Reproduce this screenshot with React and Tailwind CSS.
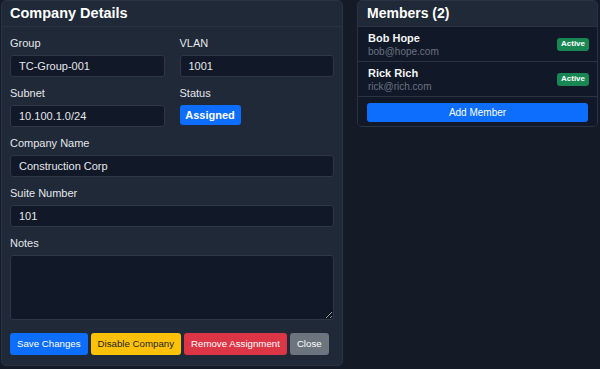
import React from "react";

const font = { fontFamily: '"Liberation Sans", Arial, sans-serif' };

function Field({ label, value, className = "" }) {
  return (
    <div className={"flex flex-col " + className}>
      <div className="h-[14px] leading-[14px] text-[11px] text-gray-200 mb-[5px]">{label}</div>
      <div className="h-[22px] rounded-[3px] border border-[#2d3748] bg-[#111827] px-[8px] flex items-center text-[11px] text-gray-200">
        {value}
      </div>
    </div>
  );
}

function Member({ name, email }) {
  return (
    <div className="h-[35px] border-b border-[#2a3342] pl-[10px] pr-[8px] flex items-center justify-between bg-[#111827]">
      <div className="flex flex-col">
        <div className="text-[11px] font-bold text-gray-100 leading-[14px]">{name}</div>
        <div className="text-[10px] text-gray-500 leading-[13px]">{email}</div>
      </div>
      <div className="h-[13px] px-[4px] rounded-[3px] bg-[#198754] text-white text-[8px] font-bold flex items-center">Active</div>
    </div>
  );
}

function Btn({ children, cls }) {
  return (
    <div className={"h-[22px] px-[7px] rounded-[3px] text-[9.7px] flex items-center whitespace-nowrap shrink-0 " + cls}>{children}</div>
  );
}

export default function App() {
  return (
    <div style={font} className="w-[600px] h-[369px] bg-[#141a26] flex items-start gap-[14px] pl-[1px] overflow-hidden">
      <div className="w-[342px] h-[366px] rounded-[5px] border border-[#2a3342] bg-[#1f2937] flex flex-col">
        <div className="h-[26px] px-[8px] flex items-center border-b border-[#2a3342] text-[14.5px] font-bold text-white">Company Details</div>
        <div className="px-[8px] pt-[9px] flex flex-col gap-[9px]">
          <div className="grid grid-cols-2 gap-[15px]">
            <Field label="Group" value="TC-Group-001" />
            <Field label="VLAN" value="1001" />
          </div>
          <div className="grid grid-cols-2 gap-[15px]">
            <Field label="Subnet" value="10.100.1.0/24" />
            <div className="flex flex-col">
              <div className="h-[14px] leading-[14px] text-[11px] text-gray-200 mb-[5px]">Status</div>
              <div className="h-[20px] w-[61px] rounded-[3px] bg-[#0d6efd] text-white text-[11px] font-bold flex items-center justify-center">Assigned</div>
            </div>
          </div>
          <Field label="Company Name" value="Construction Corp" />
          <Field label="Suite Number" value="101" />
          <div className="flex flex-col">
            <div className="h-[14px] leading-[14px] text-[11px] text-gray-200 mb-[5px]">Notes</div>
            <textarea className="h-[65px] rounded-[3px] border border-[#2d3748] bg-[#111827] resize-y outline-none" />
          </div>
          <div className="flex gap-[3px] mt-[4px]">
            <Btn cls="bg-[#0d6efd] text-white">Save Changes</Btn>
            <Btn cls="bg-[#ffc107] text-[#212529]">Disable Company</Btn>
            <Btn cls="bg-[#dc3545] text-white">Remove Assignment</Btn>
            <Btn cls="bg-[#6c757d] text-white">Close</Btn>
          </div>
        </div>
      </div>
      <div className="w-[241px] rounded-[5px] border border-[#2a3342] bg-[#1f2937] flex flex-col overflow-hidden">
        <div className="h-[26px] px-[9px] flex items-center border-b border-[#2a3342] text-[14px] font-bold text-white">Members (2)</div>
        <Member name="Bob Hope" email="bob@hope.com" />
        <Member name="Rick Rich" email="rick@rich.com" />
        <div className="bg-[#111827] px-[9px] pt-[6px] pb-[4px]">
          <div className="h-[19px] rounded-[3px] bg-[#0d6efd] text-white text-[10px] flex items-center justify-center">Add Member</div>
        </div>
      </div>
    </div>
  );
}
